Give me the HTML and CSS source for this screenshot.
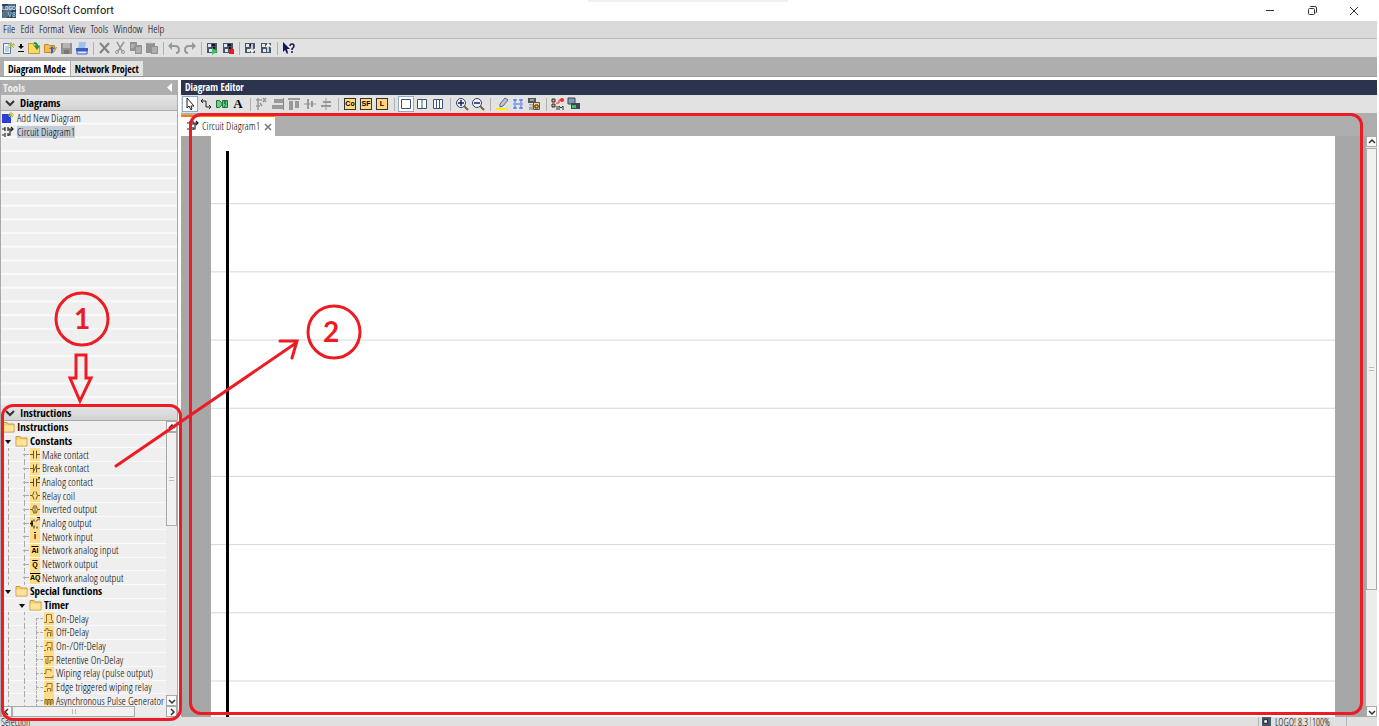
FILE: index.html
```html
<!DOCTYPE html>
<html lang="en">
<head>
    <meta charset="UTF-8">
    <meta name="viewport" content="width=device-width, initial-scale=1.0">
    <title>LOGO!Soft Comfort</title>
    <link rel="stylesheet" href="styles.css">
</head>
<body>
    <!-- Shared icons -->
    <svg class="defs" aria-hidden="true">
        <symbol id="folder" viewBox="0 0 12 12"><path d="M.5 1.500h4l1 1.500h6v8H.5z" fill="#f5cf6c" stroke="#c99a3c"/><path d="M1 4.500h10v6H1z" fill="#ffe39a"/></symbol>
        <symbol id="circuit" viewBox="0 0 12 12"><path d="M0 3h3M3 1v4M6 1v4M6 3h5M0 9h2M3 7v4M6 7v3M6 9h2V3M9 1l2 2-2 2" fill="none" stroke="#222" stroke-width="1.2"/></symbol>
        <symbol id="chip" viewBox="0 0 14 14"><path d="M2 2h10v10H2z" fill="#46566b"/><path d="M3 3h3v3H3zM4 8h3v3H4z" fill="#dfe6ee"/><path d="M7 4h3M8 7h2" stroke="#111" stroke-width="2"/></symbol>
        <symbol id="make" viewBox="0 0 10 12"><path d="M0 6h3M3.500 2v8M6.500 2v8M7 6h3" fill="none" stroke="#6e5a2a"/></symbol>
        <symbol id="break" viewBox="0 0 10 12"><path d="M0 6h3M3.500 2v8M6.500 2v8M7 6h3M3 10l4-8" fill="none" stroke="#6e5a2a"/></symbol>
        <symbol id="analog" viewBox="0 0 10 12"><path d="M0 6h3M3.500 2v8M6.500 2v8M7 6h3M7 4l3-3M8 1h2v2" fill="none" stroke="#5a4a22"/></symbol>
        <symbol id="coil" viewBox="0 0 10 12"><path d="M0 6h2M4 2Q1 6 4 10M6 2q3 4 0 8M8 6h2" fill="none" stroke="#6e5a2a"/></symbol>
        <symbol id="invert" viewBox="0 0 10 12"><path d="M0 6h2M4 2Q1 6 4 10M6 2q3 4 0 8M8 6h2M5 2v8" fill="none" stroke="#6e5a2a"/></symbol>
        <symbol id="aout" viewBox="0 0 10 12"><path d="M0 6h3M2 3v6" stroke="#111" stroke-width="1.500"/><path d="M4 2v2M4 8v3M7 9v2M6 4l3-3M7 0h3v3" fill="none" stroke="#222"/></symbol>
        <symbol id="ondelay" viewBox="0 0 10 12"><path d="M0 10h2.500V2h5v5l2 3H5" fill="none" stroke="#957536"/></symbol>
        <symbol id="offdelay" viewBox="0 0 10 12"><path d="M0 4h2V2h2v2h4v6M3.500 10V6h3v4" fill="none" stroke="#957536"/></symbol>
        <symbol id="onoff" viewBox="0 0 10 12"><path d="M1 5h2V2h5v8M3.500 10V7h3v3M0 10h2" fill="none" stroke="#957536"/></symbol>
        <symbol id="retentive" viewBox="0 0 10 12"><path d="M0 3h4v7H2V5M4 3h5v4H6v3" fill="none" stroke="#957536"/></symbol>
        <symbol id="wiping" viewBox="0 0 10 12"><path d="M0 6h2V2h5v2M1 10h8V8" fill="none" stroke="#957536"/></symbol>
        <symbol id="pulse" viewBox="0 0 10 12"><path d="M1 10V5h2v5h1V5h2v5h1V5h2v5" fill="none" stroke="#7a5c20"/></symbol>
        <symbol id="page1" viewBox="0 0 14 14"><path d="M2.500 2.500h9v9h-9z" fill="#fff" stroke="#405078"/></symbol>
    </svg>

    <div class="app">
        <header class="titlebar">
            <svg class="logo" viewBox="0 0 15 15"><path d="M0 0h15v15H0z" fill="#31485c"/><path d="M0 9l7-9h8L5 15H0z" fill="#567185"/><text x="0" y="6" class="logo-text">LOGO</text><text x="6" y="14" class="logo-text big">V8</text></svg>
            <h1>LOGO!Soft Comfort</h1>
            <span class="top-shade"></span>
            <div class="window-buttons">
                <button aria-label="Minimize"><svg viewBox="0 0 12 12"><path d="M2 5.500h8" stroke="#333"/></svg></button>
                <button aria-label="Restore"><svg viewBox="0 0 12 12"><path d="M2.500 4.500q0-1 1-1h4q1 0 1 1v4q0 1-1 1h-4q-1 0-1-1zM4 2q0-.5 1-.5h4q1.500 0 1.500 1.500v4q0 1-1 1" fill="none" stroke="#333"/></svg></button>
                <button aria-label="Close"><svg viewBox="0 0 12 12"><path d="M2 2l8 8M10 2l-8 8" stroke="#333"/></svg></button>
            </div>
        </header>

        <nav class="menubar">
            <button>File</button>
            <button>Edit</button>
            <button>Format</button>
            <button>View</button>
            <button>Tools</button>
            <button>Window</button>
            <button>Help</button>
        </nav>

        <div class="toolbar main-tools">
            <button aria-label="New"><svg viewBox="0 0 14 14"><path d="M2.500 2.500h7v10h-7z" fill="#eef4ff" stroke="#5878b8"/><path d="M4 6h4M4 8h4M4 10h4" stroke="#8aa4d4"/><path d="M10 1v7M7 4h7M8 2l5 5M13 2L8 7" stroke="#a5b830"/></svg></button>
            <button class="small" aria-label="New type"><svg viewBox="0 0 8 14"><path d="M3 3h2v2h2L4 8 1 5h2zM1 10h6v1H1z" fill="#111"/></svg></button>
            <button aria-label="Open"><svg viewBox="0 0 14 14"><path d="M1.500 2.500h5v2h6v8h-11z" fill="#ffd966" stroke="#c99a3c"/><path d="M7 1q4 0 4 4h2l-3 4-3-4h2q0-2-2-2z" fill="#239a38"/></svg></button>
            <button aria-label="Close file"><svg viewBox="0 0 14 14"><path d="M1.500 3.500h4l1 1h5v3l2-1-3 5h-9z" fill="#f5bd45" stroke="#c08a2c"/><path d="M8 13V8H6l3-3 3 3h-2q1 4-2 5z" fill="#3a63d8"/></svg></button>
            <button aria-label="Save"><svg viewBox="0 0 14 14"><path d="M2 2h11v11H2z" fill="#919191"/><path d="M4 2h7v5H4z" fill="#b5b5b5"/><path d="M5 9h5v4H5z" fill="#777"/></svg></button>
            <button aria-label="Print"><svg viewBox="0 0 14 14"><path d="M4 1h7l-1 6H3z" fill="#9ec1f2"/><path d="M1 7h12v3H1z" fill="#3b5fc0"/><path d="M2 10h10v3H2z" fill="#dfe8ff" stroke="#3b5fc0"/></svg></button>
            <i class="sep"></i>
            <button aria-label="Delete"><svg viewBox="0 0 14 14"><path d="M3 2l9 10M12 2L3 12" stroke="#838383" stroke-width="2"/></svg></button>
            <button aria-label="Cut"><svg viewBox="0 0 14 14"><path d="M4 1l5 9M11 1L5 10" stroke="#929292" stroke-width="1.500"/><circle cx="4" cy="11" r="1.500" fill="none" stroke="#929292"/><circle cx="10" cy="11" r="1.500" fill="none" stroke="#929292"/></svg></button>
            <button aria-label="Copy"><svg viewBox="0 0 14 14"><path d="M1 1h7v9H1zM6 4h7v9H6z" fill="#929292"/><path d="M2 4h4M2 6h3M7 7h5M7 9h5M7 11h5" stroke="#c9c9c9"/></svg></button>
            <button aria-label="Paste"><svg viewBox="0 0 14 14"><path d="M1 2h9v10H1zM6 5h7v8H6z" fill="#929292"/><path d="M3 2h5M7 7h5M7 9h5M7 11h5" stroke="#c9c9c9"/></svg></button>
            <i class="sep"></i>
            <button aria-label="Undo"><svg viewBox="0 0 14 14"><path d="M3 5h5q4 0 4 4 0 3-3 3" fill="none" stroke="#999" stroke-width="2"/><path d="M1 5l4-4v8z" fill="#999"/></svg></button>
            <button aria-label="Redo"><svg viewBox="0 0 14 14"><path d="M11 5H6Q2 5 2 9q0 3 3 3" fill="none" stroke="#999" stroke-width="2"/><path d="M13 5L9 1v8z" fill="#999"/></svg></button>
            <i class="sep"></i>
            <button aria-label="Start"><svg viewBox="0 0 14 14"><use href="#chip"/><path d="M7 7l6 3-6 4z" fill="#35c45c"/></svg></button>
            <button aria-label="Stop"><svg viewBox="0 0 14 14"><use href="#chip"/><path d="M8 8h5v5H8z" fill="#f01818"/></svg></button>
            <i class="sep"></i>
            <button aria-label="Download"><svg viewBox="0 0 14 14"><use href="#chip"/><path d="M9 3v7M7 8l2 3 3-3" fill="none" stroke="#fff" stroke-width="1.500"/></svg></button>
            <button aria-label="Upload"><svg viewBox="0 0 14 14"><use href="#chip"/><path d="M9 11V4M7 6l2-3 3 3" fill="none" stroke="#fff" stroke-width="1.500"/></svg></button>
            <i class="sep"></i>
            <button aria-label="Context help"><svg viewBox="0 0 14 14"><path d="M2 1v10l2-2 2 4 1-1-1-4h3z" fill="#14145a"/><path d="M9 5q0-2 2-2t2 2q0 1-2 3v1M11 10v2" fill="none" stroke="#14145a" stroke-width="1.500"/></svg></button>
        </div>

        <div class="mode-tabs">
            <button class="active">Diagram Mode</button>
            <button>Network Project</button>
        </div>

        <main>
            <aside class="tools">
                <div class="panel-title">Tools <svg viewBox="0 0 6 9"><path d="M5 0v9L0 4.500z" fill="#fff"/></svg></div>
                <button class="section"><svg viewBox="0 0 10 10"><path d="M1 3l4 4 4-4" fill="none" stroke="#333" stroke-width="2"/></svg><span>Diagrams</span></button>
                <ul class="diagrams">
                    <li><svg viewBox="0 0 12 12"><path d="M0 2h9v9H0z" fill="#2a3fd8"/><path d="M9 0v6M6 3h6M7 1l4 4M11 1L7 5" stroke="#b3bd28"/></svg><span>Add New Diagram</span></li>
                    <li class="selected"><svg><use href="#circuit"/></svg><span>Circuit Diagram1</span></li>
                </ul>
                <div class="instructions">
                    <button class="section"><svg viewBox="0 0 10 10"><path d="M1 3l4 4 4-4" fill="none" stroke="#333" stroke-width="2"/></svg><span>Instructions</span></button>
                    <div class="tree-area">
                        <div class="tree-view">
                            <ul class="tree">
                                <li class="root"><svg class="folder"><use href="#folder"/></svg>Instructions</li>
                                <li class="group"><svg class="folder"><use href="#folder"/></svg>Constants</li>
                                <li><svg class="fn"><use href="#make"/></svg>Make contact</li>
                                <li><svg class="fn"><use href="#break"/></svg>Break contact</li>
                                <li><svg class="fn"><use href="#analog"/></svg>Analog contact</li>
                                <li><svg class="fn"><use href="#coil"/></svg>Relay coil</li>
                                <li><svg class="fn"><use href="#invert"/></svg>Inverted output</li>
                                <li><svg class="fn"><use href="#aout"/></svg>Analog output</li>
                                <li><b class="fn">I</b>Network input</li>
                                <li><b class="fn">AI</b>Network analog input</li>
                                <li><b class="fn">Q</b>Network output</li>
                                <li><b class="fn">AQ</b>Network analog output</li>
                                <li class="group"><svg class="folder"><use href="#folder"/></svg>Special functions</li>
                                <li class="group sub"><svg class="folder"><use href="#folder"/></svg>Timer</li>
                                <li class="deep"><svg class="fn"><use href="#ondelay"/></svg>On-Delay</li>
                                <li class="deep"><svg class="fn"><use href="#offdelay"/></svg>Off-Delay</li>
                                <li class="deep"><svg class="fn"><use href="#onoff"/></svg>On-/Off-Delay</li>
                                <li class="deep"><svg class="fn"><use href="#retentive"/></svg>Retentive On-Delay</li>
                                <li class="deep"><svg class="fn"><use href="#wiping"/></svg>Wiping relay (pulse output)</li>
                                <li class="deep"><svg class="fn"><use href="#onoff"/></svg>Edge triggered wiping relay</li>
                                <li class="deep"><svg class="fn"><use href="#pulse"/></svg>Asynchronous Pulse Generator</li>
                            </ul>
                        </div>
                        <div class="scroll vertical">
                            <button aria-label="Scroll up"><svg viewBox="0 0 8 8"><path d="M1 5l3-3 3 3" fill="none" stroke="#333" stroke-width="1.500"/></svg></button>
                            <i class="thumb"></i>
                            <button aria-label="Scroll down"><svg viewBox="0 0 8 8"><path d="M1 3l3 3 3-3" fill="none" stroke="#333" stroke-width="1.500"/></svg></button>
                        </div>
                    </div>
                    <div class="scroll horizontal">
                        <button aria-label="Scroll left"><svg viewBox="0 0 8 8"><path d="M5 1L2 4l3 3" fill="none" stroke="#333" stroke-width="1.500"/></svg></button>
                        <i class="thumb"></i>
                        <button aria-label="Scroll right"><svg viewBox="0 0 8 8"><path d="M3 1l3 3-3 3" fill="none" stroke="#333" stroke-width="1.500"/></svg></button>
                    </div>
                    <div class="frame"></div>
                </div>
            </aside>

            <section class="editor">
                <h2>Diagram Editor</h2>
                <div class="toolbar">
                    <button class="on" aria-label="Select"><svg viewBox="0 0 14 14"><path d="M4 1v10l2-2 2 4 1-1-1-3h3z" fill="#fff" stroke="#222"/></svg></button>
                    <button aria-label="Connect"><svg viewBox="0 0 14 14"><path d="M2 4h5v6h5M4 2L2 4l2 2M10 8l2 2-2 2" fill="none" stroke="#222"/></svg></button>
                    <button aria-label="Cut connection"><svg viewBox="0 0 14 14"><path d="M1.500 3.500h3l3 3.500-3 3.500h-3zM12.500 3.500h-5v7h5z" fill="#62d884" stroke="#207040"/><path d="M9 4l2 3-2 3M11 4L9 7" fill="none" stroke="#207040"/></svg></button>
                    <button class="letter" aria-label="Text">A</button>
                    <i class="sep"></i>
                    <button aria-label="Align grid"><svg viewBox="0 0 14 14"><path d="M3 1v12M5 3h2M1 3h4M1 9h4M8 1l3 4M11 1L8 5M5 6l2 3" stroke="#9a9a9a" stroke-width="1.500"/></svg></button>
                    <button aria-label="Align right"><svg viewBox="0 0 14 14"><path d="M3 2h9v4H3zM1 8h11v4H1z" fill="#999"/><path d="M12.500 1v12" stroke="#888"/></svg></button>
                    <button aria-label="Align top"><svg viewBox="0 0 14 14"><path d="M1 1h12v2H1zM2 4h4v9H2zM8 4h4v7H8z" fill="#999"/></svg></button>
                    <button aria-label="Center vertical"><svg viewBox="0 0 14 14"><path d="M1 7h12" stroke="#999"/><path d="M5 2v10M9 4v6" stroke="#999" stroke-width="2"/></svg></button>
                    <button aria-label="Center horizontal"><svg viewBox="0 0 14 14"><path d="M7 1v12" stroke="#999"/><path d="M2 9h10M4 5h8" stroke="#999" stroke-width="2"/></svg></button>
                    <i class="sep"></i>
                    <button class="palette"><span>Co</span></button>
                    <button class="palette"><span>SF</span></button>
                    <button class="palette"><span>L</span></button>
                    <i class="sep"></i>
                    <button class="on" aria-label="One window"><svg viewBox="0 0 14 14"><use href="#page1"/></svg></button>
                    <button aria-label="Two windows"><svg viewBox="0 0 14 14"><use href="#page1"/><path d="M7 3v8" stroke="#405078"/></svg></button>
                    <button aria-label="Three windows"><svg viewBox="0 0 14 14"><use href="#page1"/><path d="M5.500 3v8M8.500 3v8" stroke="#405078"/></svg></button>
                    <i class="sep"></i>
                    <button aria-label="Zoom in"><svg viewBox="0 0 14 14"><path d="M9 9l4 4" stroke="#806030" stroke-width="2"/><circle cx="6" cy="6" r="4.500" fill="#e8f2ff" stroke="#384060"/><path d="M3 6h6M6 3v6" stroke="#202050" stroke-width="1.500"/></svg></button>
                    <button aria-label="Zoom out"><svg viewBox="0 0 14 14"><path d="M9 9l4 4" stroke="#806030" stroke-width="2"/><circle cx="6" cy="6" r="4.500" fill="#e8f2ff" stroke="#384060"/><path d="M3 6h6" stroke="#202050" stroke-width="1.500"/></svg></button>
                    <i class="sep"></i>
                    <button aria-label="Highlight"><svg viewBox="0 0 14 14"><path d="M5 7l5-6 3 2-5 6-3 1z" fill="#b9c8d8" stroke="#59687a"/><path d="M1 11h12v2H1z" fill="#ffee00"/></svg></button>
                    <button aria-label="Grid"><svg viewBox="0 0 14 14"><path d="M1 1h12v12H1z" fill="#dce4fa"/><path d="M2 3h4M8 3h4M2 7h10M2 11h4M8 11h4M4 2v4M10 2v4M4 8v4M10 8v4" stroke="#5068b0"/></svg></button>
                    <button aria-label="Layout"><svg viewBox="0 0 14 14"><path d="M1 1h8v5H1z" fill="#555"/><path d="M2 7h4v6H2z" fill="#aaa"/><path d="M3 3h4M2 9h3" stroke="#eee"/><path d="M6.500 5.500h6v7h-6z" fill="#ffd36b" stroke="#555"/><path d="M8 8h3v3H8z" fill="none" stroke="#222"/></svg></button>
                    <i class="sep"></i>
                    <button aria-label="Simulation"><svg viewBox="0 0 14 14"><path d="M1 2h3v3H1zM1 7h3v3H1z" fill="#d8b060" stroke="#333"/><path d="M5 6h3V3h3" fill="none" stroke="#e03030"/><circle cx="11" cy="3" r="2" fill="#f02828"/><path d="M6 9v4M8 13V9l2 2 2-2v4" fill="none" stroke="#333"/></svg></button>
                    <button aria-label="Online test"><svg viewBox="0 0 14 14"><path d="M1 1h7v6H1z" fill="#7f9dbb" stroke="#445"/><path d="M4 6h9v6H4z" fill="#38475a"/><path d="M5 8h4v3H5z" fill="#35c45c"/></svg></button>
                </div>
                <div class="doc-tabs">
                    <div class="doc-tab"><svg><use href="#circuit"/></svg><span>Circuit Diagram1</span><button aria-label="Close diagram"><svg viewBox="0 0 8 8"><path d="M1 1l6 6M7 1L1 7" stroke="#777" stroke-width="1.500"/></svg></button></div>
                </div>
                <div class="canvas">
                    <div class="sheet"></div>
                    <div class="scroll vertical">
                        <button aria-label="Scroll up"><svg viewBox="0 0 8 8"><path d="M1 5l3-3 3 3" fill="none" stroke="#333" stroke-width="1.500"/></svg></button>
                        <i class="thumb"></i>
                        <button aria-label="Scroll down"><svg viewBox="0 0 8 8"><path d="M1 3l3 3 3-3" fill="none" stroke="#333" stroke-width="1.500"/></svg></button>
                    </div>
                </div>
                <div class="frame"></div>
            </section>
        </main>

        <footer class="status">
            <span class="message">Selection</span>
            <span class="device"><svg viewBox="0 0 10 10"><path d="M0 0h10v10H0z" fill="#46566b"/><path d="M2 3h4v4H2z" fill="#fff" stroke="#111"/></svg>LOGO! 8.3</span>
            <span class="zoom">100%</span>
            <span class="spare"></span>
        </footer>
    </div>

    <!-- Callouts on top of the window -->
    <svg class="callouts" viewBox="0 0 400 500">
        <circle cx="82" cy="319" r="26"/>
        <circle cx="334" cy="332" r="26"/>
        <path d="M76 355h10v23h5l-11 23-10-23h6z"/>
        <path d="M116 466L296 343M280 341h17l-5 17" stroke-linecap="round"/>
        <text x="82" y="329">1</text>
        <text x="331" y="342">2</text>
    </svg>
</body>
</html>
```
FILE: styles.css
```css
* {
    box-sizing: border-box;
}
body {
    margin: 0;
    overflow: hidden;
    background: white;
    color: #000;
    font-family: "Open Sans Condensed Light", "Liberation Sans Narrow", sans-serif;
    font-size: 11px;
    line-height: 12px;
}
button {
    margin: 0;
    padding: 0;
    border: none;
    background: none;
    color: inherit;
    font: inherit;
}
svg {
    display: block;
    flex: none;
}
h1, h2, ul {
    margin: 0;
    padding: 0;
}
.defs {
    position: absolute;
    width: 0;
    height: 0;
}
.app {
    display: flex;
    flex-direction: column;
    height: 100vh;
    padding-right: 2px;
}

/* Headings use the bold condensed face */
.mode-tabs button, .panel-title, .section, .editor h2, .tree li.root, .tree li.group {
    font-family: "Open Sans Condensed", "Liberation Sans Narrow", sans-serif;
    font-weight: bold;
}

/* Window bars */
.titlebar {
    display: flex;
    align-items: center;
    flex: none;
    height: 21px;
    padding: 0 2px;
}
.titlebar h1 {
    flex: 1;
    margin-left: 3px;
    font: 11px Roboto, sans-serif;
    color: #111;
}
.logo {
    width: 14px;
    height: 14px;
}
.logo-text {
    font: bold 5px "Liberation Sans", sans-serif;
    fill: #eef3f7;
}
.logo-text.big {
    font-size: 7px;
    fill: #a9bfce;
}
.top-shade {
    position: absolute;
    top: 0;
    left: 588px;
    width: 200px;
    height: 2px;
    background: #f0f0f0;
}
.window-buttons {
    display: flex;
}
.window-buttons button {
    display: grid;
    place-items: center;
    width: 42px;
    height: 20px;
}
.window-buttons svg {
    width: 12px;
    height: 12px;
}
.menubar {
    display: flex;
    align-items: center;
    flex: none;
    gap: 5px;
    height: 18px;
    padding: 0 3px 2px;
    background: #dadada;
    border-bottom: 1px solid #bcbcbc;
}
.toolbar {
    display: flex;
    align-items: center;
    flex: none;
    height: 18px;
    background: #e2e2e2;
}
.toolbar button {
    display: grid;
    place-items: center;
    width: 16px;
    height: 16px;
}
.toolbar svg {
    width: 14px;
    height: 14px;
}
.toolbar .small {
    width: 10px;
}
.toolbar .small svg {
    width: 8px;
}
.toolbar .on {
    background: white;
    border: 1px solid #8fabc4;
}
.sep {
    width: 8px;
    height: 13px;
    background: linear-gradient(#b0b0b0, #b0b0b0) center / 1px 100% no-repeat;
}
.main-tools .sep {
    width: 6px;
}
.mode-tabs {
    display: flex;
    align-items: flex-end;
    flex: none;
    gap: 1px;
    height: 20px;
    padding-left: 4px;
    background: #aeaeae;
    border-bottom: 1px solid #999;
}
.mode-tabs button {
    height: 15px;
    padding: 0 4px;
    background: #e2e2e2;
    font-size: 10px;
}
.mode-tabs .active {
    background: white;
}

main {
    display: flex;
    flex: 1;
    gap: 3px;
    min-height: 0;
    padding-top: 3px;
}

/* Left panel */
.tools {
    display: flex;
    flex-direction: column;
    flex: none;
    width: 178px;
    border-right: 1px solid #aaa;
    border-left: 1px solid #aaa;
    background: #efefef;
}
.panel-title {
    display: flex;
    align-items: center;
    justify-content: space-between;
    height: 15px;
    padding: 0 4px 0 2px;
    background: #aeaeae;
    color: #eee;
}
.panel-title svg {
    width: 6px;
    height: 9px;
}
.section {
    display: flex;
    align-items: center;
    flex: none;
    width: 100%;
    height: 16px;
    padding-left: 4px;
    background: linear-gradient(#e6e6e6, #d2d2d2);
    border-bottom: 1px solid #aaa;
}
.section svg {
    width: 10px;
    height: 10px;
    margin-right: 5px;
}
.diagrams {
    flex: 1;
    list-style: none;
    background: linear-gradient(to top, #fafafa 2px, #efefef 2px) 0 0 / 100% calc(100% / 21.5);
}
.diagrams li {
    display: flex;
    align-items: center;
    gap: 3px;
    height: 14px;
    padding-left: 1px;
}
.diagrams svg, .doc-tab > svg {
    width: 12px;
    height: 12px;
}
.selected span {
    background: #c2cbd6;
}
.instructions {
    position: relative;
    display: flex;
    flex-direction: column;
    flex: none;
    height: 312px;
    background: #efefef;
}
.tree-area {
    display: flex;
    flex: 1;
    min-height: 0;
}
.tree-view {
    flex: 1;
    min-width: 0;
    overflow: hidden;
}
.tree {
    display: grid;
    grid-auto-rows: 1fr;
    height: 287px;
    list-style: none;
}
.tree li {
    position: relative;
    display: flex;
    align-items: center;
    min-height: 0;
    padding-left: 29px;
    border-bottom: 1px solid #fafafa;
    white-space: nowrap;
}
.tree li.root {
    padding-left: 1px;
}
.tree li.group {
    padding-left: 14px;
}
.tree li.sub {
    padding-left: 28px;
}
.tree li.deep {
    padding-left: 43px;
}
.tree li::before {
    content: "";
    position: absolute;
    top: 0;
    bottom: -1px;
    left: 7px;
    width: 15px;
    border: dashed #aaa;
    border-width: 0 1px;
}
.tree li.root::before {
    display: none;
}
.tree li.group::before {
    top: 5px;
    left: 4px;
    width: 0;
    height: 0;
    border: solid transparent;
    border-width: 4px 3px 0;
    border-top-color: #111;
}
.tree li.sub::before {
    left: 18px;
}
.tree li:not(.group):not(.root)::after {
    content: "";
    position: absolute;
    left: 22px;
    top: 6px;
    width: 6px;
    border-top: 1px dashed #aaa;
}
.tree li.deep::after {
    left: 35px !important;
    height: 14px;
    border-left: 1px dashed #aaa;
}
.folder {
    width: 13px;
    height: 12px;
    margin-right: 2px;
}
.fn {
    width: 10px;
    height: 13px;
    margin-right: 2px;
    background: #ffdc88;
    font: bold 7px/13px "Liberation Sans", sans-serif;
    text-align: center;
    text-decoration: overline;
}

/* Scroll bars */
.scroll {
    display: flex;
    flex: none;
    background: #ececec;
}
.scroll button {
    display: grid;
    place-items: center;
    flex: none;
    width: 11px;
    height: 11px;
    background: #f8f8f8;
    border: 1px solid #aaa;
}
.scroll svg {
    width: 8px;
    height: 8px;
}
.scroll.vertical {
    flex-direction: column;
    justify-content: space-between;
    width: 11px;
}
.scroll.horizontal {
    justify-content: space-between;
    height: 11px;
}
.thumb {
    display: block;
    border: 1px solid #aaa;
    background: linear-gradient(#bbb 1px, transparent 1px 3px, #bbb 3px) center / 5px 4px no-repeat #f1f1f1;
}
.vertical .thumb {
    height: 33%;
    margin-bottom: auto;
}
.horizontal .thumb {
    width: 70%;
    margin-right: auto;
    background: linear-gradient(90deg, #bbb 1px, transparent 1px 3px, #bbb 3px) center / 4px 5px no-repeat #f1f1f1;
}
.canvas .thumb {
    height: 76%;
    margin-top: 1px;
}

/* Editor */
.editor {
    position: relative;
    display: flex;
    flex-direction: column;
    flex: 1;
    min-width: 0;
}
.editor h2 {
    height: 15px;
    padding-left: 4px;
    background: #2c344d;
    color: white;
    font-size: 10px;
    line-height: 15px;
}
.editor .toolbar {
    padding-left: 1px;
}
.toolbar .letter {
    font: bold 13px "Liberation Serif", serif;
}
.toolbar .palette span {
    width: 12px;
    height: 12px;
    border: 1px solid #333;
    background: #ffd97b;
    font: bold 7px/10px "Liberation Sans", sans-serif;
    text-align: center;
}
.doc-tabs {
    flex: none;
    display: flex;
    align-items: flex-end;
    height: 23px;
    background: #aeaeae;
}
.doc-tab {
    display: flex;
    align-items: center;
    gap: 3px;
    height: 21px;
    padding: 0 3px 2px 6px;
    background: white;
    border-top: 2px solid #ff8000;
}
.doc-tab button {
    padding: 2px 0 0 1px;
}
.doc-tab button svg {
    width: 8px;
    height: 8px;
}
.canvas {
    display: flex;
    flex: 1;
    min-height: 0;
    padding-left: 30px;
    background: #a7a7a7;
}
.sheet {
    flex: 1;
    margin-right: 31px;
    background:
        linear-gradient(black, black) 15px 15px / 3px 100% no-repeat,
        linear-gradient(to top, #d6d6d6 1px, white 1px) 0 0 / 100% calc(100% / 8.52);
}
.status {
    display: flex;
    flex: none;
    height: 9px;
    overflow: hidden;
    background: #e0e0e0;
    font-size: 10px;
    line-height: 11px;
}
.status span {
    height: 14px;
    border-left: 1px solid #b5b5b5;
}
.status .message {
    flex: 1;
    padding-left: 1px;
    border-left: none;
}
.device {
    display: flex;
    gap: 4px;
    padding: 0 2px 0 3px;
}
.device svg {
    width: 9px;
    height: 9px;
}
.zoom {
    width: 36px;
    padding-left: 1px;
}
.spare {
    width: 31px;
}

/* Red callouts */
.frame {
    position: absolute;
    inset: -1px -5px -4px 0;
    border: 3px solid #ed1c24;
    border-radius: 12px;
    pointer-events: none;
    z-index: 1;
}
.editor > .frame {
    inset: 33px 14px 2px 8px;
}
.callouts {
    position: absolute;
    top: 0;
    left: 0;
    z-index: 2;
    width: 400px;
    height: 500px;
    fill: none;
    stroke: #ed1c24;
    stroke-width: 3;
    pointer-events: none;
}
.callouts text {
    fill: #ed1c24;
    stroke: none;
    font: bold 28px Lato, sans-serif;
    text-anchor: middle;
}
```
